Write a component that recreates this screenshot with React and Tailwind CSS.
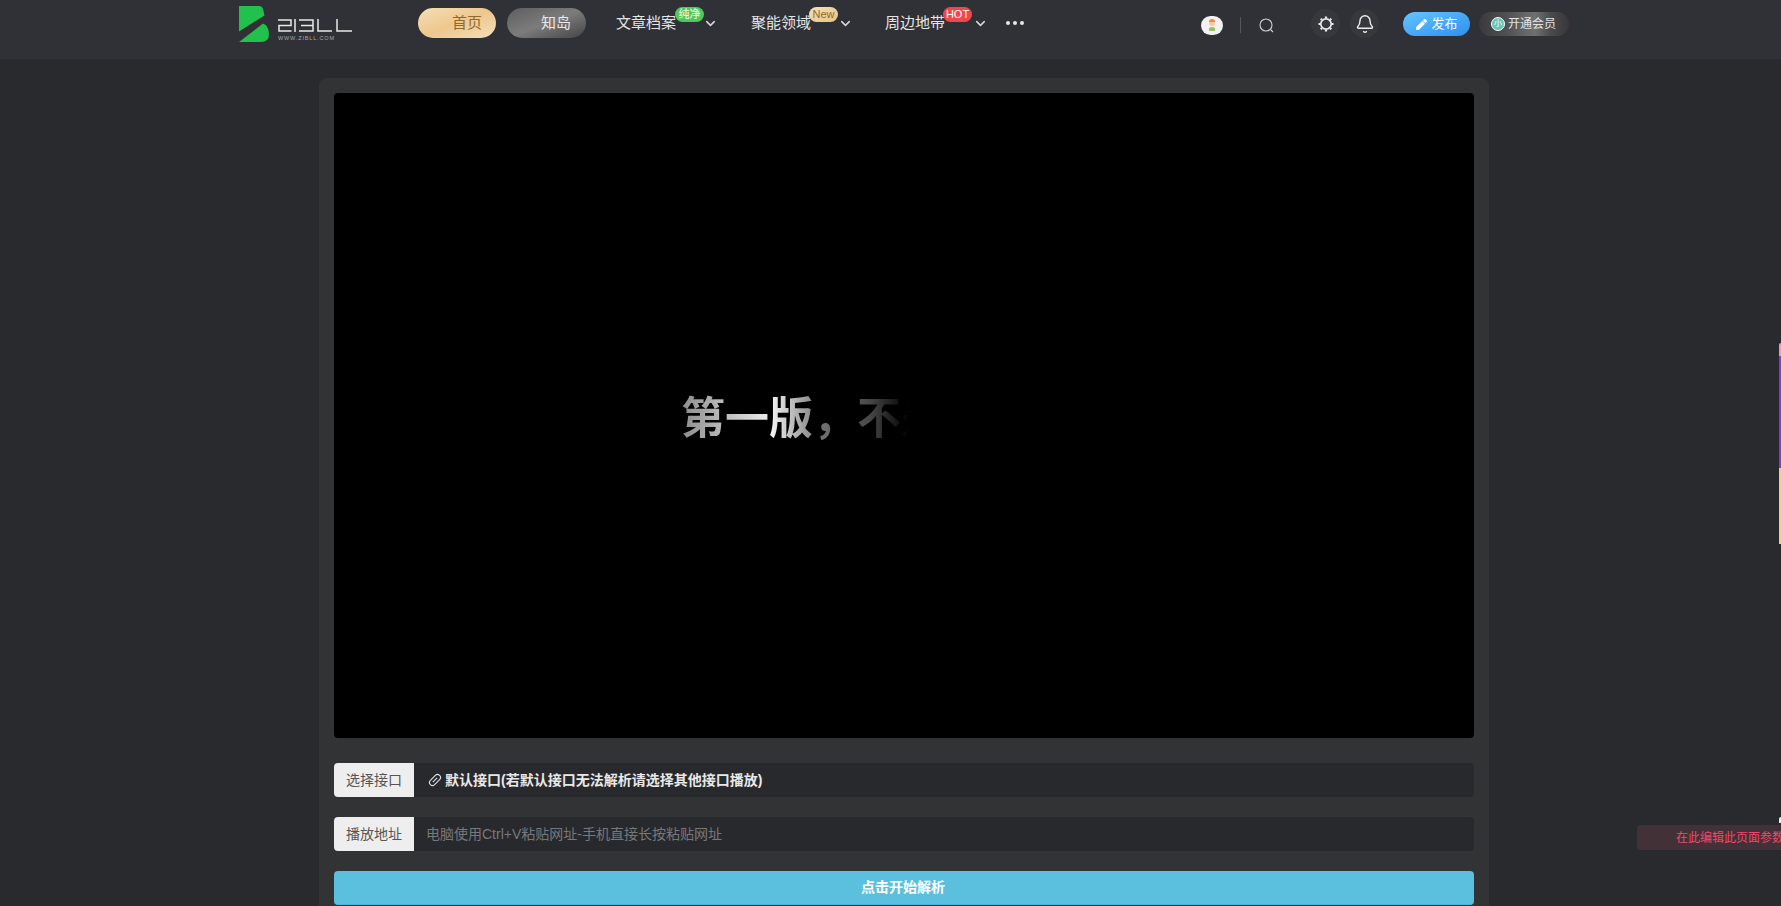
import React from "react";
import { ChevronDown, Bell } from "lucide-react";
import { FaPen } from "react-icons/fa";

const cjk = { fontFamily: '"Liberation Sans","Noto Sans CJK SC",sans-serif' };

function Logo() {
  return (
    <svg width="115" height="36" viewBox="0 0 115 36" className="block">
      <path d="M0 0H20Q23 0 24 3L25.500 9.500L0 25.500Z" fill="#22c04c" />
      <path d="M0 36L24 17.500Q30 20 30 28Q30 36 22 36Z" fill="#22c04c" />
      <g fill="none" stroke="#e8e8e8" strokeWidth="1.5">
        <path d="M39 14H52V19.500H40V25H52.500" />
        <path d="M56 13V26" />
        <path d="M60 14H74V25H60M62 19.500H74" />
        <path d="M79 13V25H93" />
        <path d="M98 13V25H113" />
      </g>
      <text x="39" y="34" fontSize="5.500" letterSpacing="0.85" fill="#a8a8a8" fontFamily="Liberation Sans">WWW.ZIBLL.COM</text>
    </svg>
  );
}

function NavItem({ label, badge, badgeClass, className, gapClass = "ml-[27px]" }) {
  return (
    <div className={"relative flex items-center h-[30px] text-[15px] text-[#e4e4e4] " + className}>
      <span>{label}</span>
      <ChevronDown size={15} strokeWidth={2.4} className={gapClass + " mt-[1px] text-[#d8d8d8]"} />
      <span className={"absolute top-[-1px] h-[15px] rounded-[8px] flex items-center justify-center text-[11px] leading-none " + badgeClass}>
        {badge}
      </span>
    </div>
  );
}

export default function App() {
  return (
    <div className="relative h-[906px] overflow-hidden bg-[#292a2d]" style={cjk}>
      <header className="h-[59px] bg-[#303136] pl-[239px] flex items-start">
        <div className="mt-[6px]"><Logo /></div>
        <div className="ml-[64px] mt-[8px] flex items-center">
          <a className="w-[78px] h-[30px] rounded-full bg-gradient-to-br from-[#f5dfb8] via-[#eec78d] to-[#f4dfbc] text-[#8f6a2c] text-[15px] flex items-center justify-end pr-[14px]">首页</a>
          <a className="ml-[11px] w-[79px] h-[30px] rounded-full bg-gradient-to-br from-[#5e5e60] via-[#7c7c7c] to-[#444446] text-[#e8e8e8] text-[15px] flex items-center justify-end pr-[15px]">知岛</a>
          <NavItem label="文章档案" badge="纯净" badgeClass="left-[59px] w-[29px] bg-[#4fc95a] text-white" className="ml-[30px]" />
          <NavItem label="聚能领域" badge="New" badgeClass="left-[58px] w-[29px] bg-gradient-to-br from-[#f7e0b8] to-[#e8c285] text-[#8f6a2c]" className="ml-[33px]" />
          <NavItem label="周边地带" badge="HOT" badgeClass="left-[58px] w-[29px] bg-[#f04848] text-white" className="ml-[32px]" gapClass="ml-[28px]" />
          <div className="ml-[18px] flex gap-[3px] mt-[-1px]">
            <span className="w-[4px] h-[4px] rounded-full bg-[#e8e8e8]" />
            <span className="w-[4px] h-[4px] rounded-full bg-[#e8e8e8]" />
            <span className="w-[4px] h-[4px] rounded-full bg-[#e8e8e8]" />
          </div>
        </div>
        <div className="ml-[177px] mt-[16px] w-[22px] h-[19px] rounded-full bg-[#f2f2f2] flex items-center justify-center">
          <svg width="10" height="13" viewBox="0 0 10 13">
            <circle cx="5" cy="4" r="3" fill="#f6c7a2" />
            <path d="M2 3a3 3 0 0 1 6 0z" fill="#ee8a3c" />
            <path d="M2 12V9q3-2 6 0v3z" fill="#9cc25c" />
          </svg>
        </div>
        <div className="ml-[17px] mt-[17px] w-px h-[16px] bg-[#55565a]" />
        <svg className="ml-[18px] mt-[18px]" width="15" height="15" viewBox="0 0 15 15" fill="none" stroke="#d0d0d0" strokeWidth="1.1">
          <circle cx="7" cy="7" r="6" />
          <path d="M11.500 11.500L14 14" />
        </svg>
        <div className="ml-[37px] mt-[9px] w-[29px] h-[29px] rounded-full bg-[#37383c] flex items-center justify-center">
          <svg width="16" height="16" viewBox="0 0 16 16">
            <circle cx="8" cy="8" r="5.200" fill="none" stroke="#ececec" strokeWidth="1.700" />
            <g stroke="#ececec" strokeWidth="2.200">
              <path d="M8 0.500V2" /><path d="M8 14V15.500" /><path d="M0.500 8H2" /><path d="M14 8H15.500" />
              <path d="M2.700 2.700L3.800 3.800" /><path d="M12.200 12.200L13.300 13.300" /><path d="M13.300 2.700L12.200 3.800" /><path d="M3.800 12.200L2.700 13.300" />
            </g>
          </svg>
        </div>
        <div className="ml-[10px] mt-[9px] w-[29px] h-[29px] rounded-full bg-[#37383c] flex items-center justify-center">
          <Bell size={20} strokeWidth={1.7} className="text-[#ececec]" />
        </div>
        <a className="ml-[24px] mt-[12px] w-[67px] h-[24px] rounded-full bg-gradient-to-br from-[#66c4ff] to-[#2b8ff0] text-white text-[13px] flex items-center justify-center gap-[5px]">
          <FaPen size={11} />发布
        </a>
        <a className="ml-[9px] mt-[12px] w-[90px] h-[24px] rounded-full bg-[linear-gradient(90deg,#3a3a3d_0%,#505052_30%,#707072_62%,#4a4a4c_80%,#38383b_100%)] text-[#e4e4e4] text-[12px] flex items-center pl-[12px] gap-[3px]">
          <span className="w-[14px] h-[14px] rounded-full bg-[#6ac5b8] border border-white text-white text-[8px] leading-none flex items-center justify-center">小</span>
          开通会员
        </a>
      </header>

      <main className="ml-[319px] mt-[19px] w-[1170px] rounded-t-[8px] bg-[#323335] px-[15px] pt-[15px] pb-[20px]">
        <div className="h-[645px] rounded-[4px] bg-black flex items-center">
          <div className="ml-[347px] w-[228px] mt-[6px] overflow-hidden whitespace-nowrap text-[44px] font-bold leading-[60px] text-transparent bg-clip-text bg-[linear-gradient(90deg,#8c8c8c_0%,#f0f0f0_40%,#707070_62%,#4a4a4a_82%,#000_100%)]">
            第一版，不是
          </div>
        </div>

        <div className="mt-[25px] h-[34px] flex rounded-[4px] bg-[#28292c] overflow-hidden">
          <span className="w-[80px] bg-[#eeeeee] text-[#555] text-[14px] flex items-center justify-center">选择接口</span>
          <span className="ml-[14px] flex items-center text-[14px] font-bold text-[#e8e8e8]">
            <svg className="mr-[3px]" width="14" height="14" viewBox="0 0 14 14" fill="none" stroke="#e0e0e0" strokeWidth="1.100">
              <rect x="0.500" y="4" width="13" height="6" rx="3" transform="rotate(-45 7 7)" />
              <path d="M4.800 9.200L9.200 4.800" />
            </svg>
            默认接口(若默认接口无法解析请选择其他接口播放)
          </span>
        </div>
        <div className="mt-[20px] h-[34px] flex rounded-[4px] bg-[#28292c] overflow-hidden">
          <span className="w-[80px] bg-[#eeeeee] text-[#555] text-[14px] flex items-center justify-center">播放地址</span>
          <span className="ml-[12px] flex items-center text-[14px] text-[#77787b]">电脑使用Ctrl+V粘贴网址-手机直接长按粘贴网址</span>
        </div>
        <button className="mt-[20px] w-full h-[34px] rounded-[4px] bg-[#5bc0de] border-b border-[#46b8da] text-white text-[14px] font-bold pr-[2px]">点击开始解析</button>
      </main>

      <div className="absolute right-0 top-[825px] w-[144px] h-[25px] rounded-l-[4px] bg-[#423237] text-[#f0486e] text-[12px] leading-[27px] pl-[39px] whitespace-nowrap overflow-hidden">在此编辑此页面参数</div>
      <div className="absolute right-0 top-[343px] w-[2px] h-[13px] rounded-tl-[2px] bg-[#e89ac0]" />
      <div className="absolute right-0 top-[356px] w-[2px] h-[112px] bg-[#8f38c8]" />
      <div className="absolute right-0 top-[468px] w-[2px] h-[76px] bg-[#f0d088]" />
      <div className="absolute right-0 top-[817px] w-[2px] h-[6px] rounded-tl-[2px] bg-[#eeeeee]" />
    </div>
  );
}
